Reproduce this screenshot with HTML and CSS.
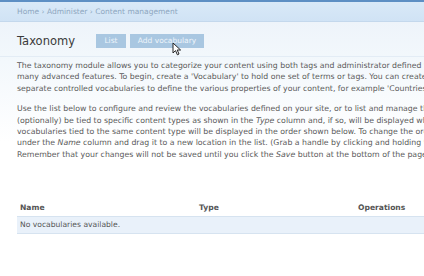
FILE: index.html
```html
<html>
	<head>
		<meta charset="utf-8">
		<title>Taxonomy</title>
		<link rel="stylesheet" href="styles.css">
	</head>
	<body>
		<div class="header">
			<div class="breadcrumb">Home › Administer › Content management</div>
		</div>
		<div class="content">
			<div class="title-row">
				<h1>Taxonomy</h1>
				<ul class="tabs">
					<li class="tab-list">List</li>
					<li class="tab-add">Add vocabulary</li>
				</ul>
				<svg class="cursor" width="10" height="14" viewBox="0 0 10 14">
					<path d="M1 1 L1 11 L3.5 8.6 L5.4 12.8 L7 12 L5.2 8 L8.6 8 Z" fill="#fff" stroke="#222" stroke-width="1"/>
				</svg>
			</div>
			<div class="help">
				<p>The taxonomy module allows you to categorize your content using both tags and administrator defined terms.<br>
				many advanced features. To begin, create a 'Vocabulary' to hold one set of terms or tags. You can create one<br>
				separate controlled vocabularies to define the various properties of your content, for example 'Countries'</p>
				<p>Use the list below to configure and review the vocabularies defined on your site, or to list and manage the terms<br>
				(optionally) be tied to specific content types as shown in the <em>Type</em> column and, if so, will be displayed when<br>
				vocabularies tied to the same content type will be displayed in the order shown below. To change the order<br>
				under the <em>Name</em> column and drag it to a new location in the list. (Grab a handle by clicking and holding the<br>
				Remember that your changes will not be saved until you click the <em>Save</em> button at the bottom of the page.</p>
			</div>
			<table class="vocab">
				<thead>
					<tr>
						<th class="col-name">Name</th>
						<th class="col-type">Type</th>
						<th class="col-ops">Operations</th>
					</tr>
				</thead>
				<tbody>
					<tr class="empty">
						<td colspan="3">No vocabularies available.</td>
					</tr>
				</tbody>
			</table>
		</div>
	</body>
</html>
```

FILE: styles.css
```css
* {
	margin: 0;
	padding: 0;
}

body {
	width: 424px;
	height: 276px;
	overflow: hidden;
	background: #fff;
	font-family: "DejaVu Sans", Verdana, sans-serif;
	color: #555;
}

.header {
	height: 19px;
	border-top: 2px solid #5d8fc4;
	border-bottom: 1px solid #c4d8ec;
	background: linear-gradient(#d9e9f8, #d0e3f5);
}

.breadcrumb {
	padding: 5px 0 0 17px;
	font-size: 7.5px;
	color: #8ea6c0;
}

.content {
	padding-left: 17px;
	background: linear-gradient(#eef4fa, #f3f8fc 40px, #fff 120px);
}

.title-row {
	position: relative;
	display: flex;
	align-items: center;
	height: 31px;
	padding-top: 3px;
	border-bottom: 1px solid #e3ecf5;
	margin-left: -17px;
	padding-left: 17px;
}

h1 {
	font-size: 11.5px;
	font-weight: normal;
	color: #3a3a3a;
	width: 79px;
}

.tabs {
	display: flex;
	gap: 4px;
	list-style: none;
}

.tabs li {
	height: 14px;
	line-height: 14px;
	background: #a9c7e1;
	color: #eef5fb;
	font-size: 7.5px;
	text-align: center;
}

.tab-list {
	width: 30px;
}

.tab-add {
	width: 74px;
}

.cursor {
	position: absolute;
	left: 172px;
	top: 20px;
}

.help {
	padding-top: 3px;
	font-size: 7.8px;
	line-height: 11.4px;
	white-space: nowrap;
	color: #5a5a5a;
}

.help p {
	margin-bottom: 9px;
}

.vocab {
	margin-top: 39px;
	width: 420px;
	border-collapse: collapse;
	font-size: 7.6px;
	color: #555;
}

.vocab th {
	text-align: left;
	font-weight: bold;
	height: 17px;
	padding-left: 3px;
}

.col-name {
	width: 176px;
}

.col-type {
	width: 156px;
}

.empty td {
	height: 17px;
	padding-left: 3px;
	background: #e9f1fa;
	border-top: 1px solid #d6e3f0;
	border-bottom: 1px solid #d6e3f0;
}
```
